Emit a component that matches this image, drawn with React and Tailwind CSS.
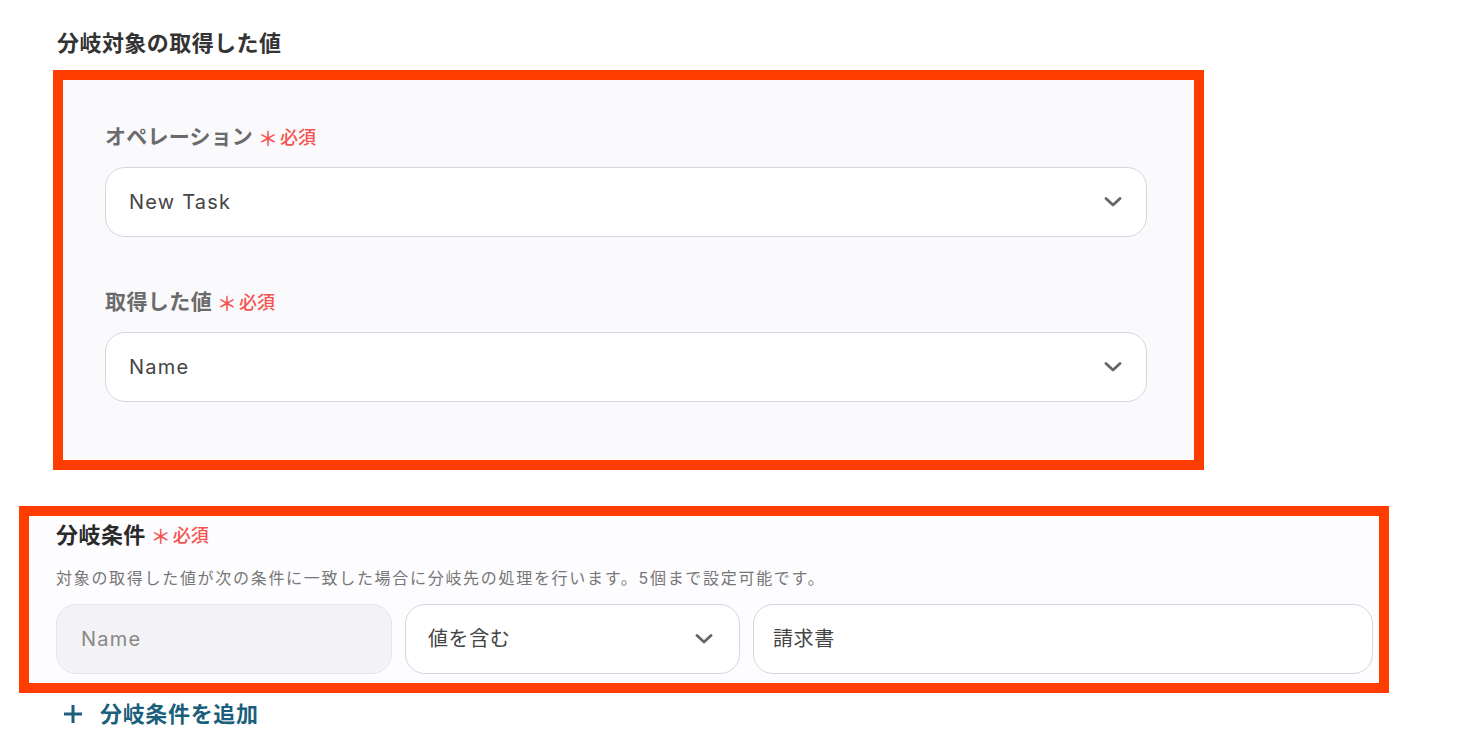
import React from "react";

const FONT = { fontFamily: '"Inter", "Noto Sans CJK JP", sans-serif' };

function Chevron() {
  return (
    <svg width="18" height="10" viewBox="0 0 18 10" fill="none">
      <path d="M2 1.5 L9 8 L16 1.5" stroke="#666" strokeWidth="2.8" strokeLinecap="round" strokeLinejoin="round" />
    </svg>
  );
}

function Required() {
  return (
    <span className="flex items-center text-[#f4534f] text-[18px] font-medium ml-[5px]">
      <span className="text-[20px] mr-[2px] translate-y-[2px]">＊</span>
      <span>必須</span>
    </span>
  );
}

function Select({ value }) {
  return (
    <div className="w-[1042px] h-[70px] rounded-[20px] border border-[#d6d6de] bg-white flex items-center justify-between pl-[23px] pr-[24px]">
      <span className="text-[20px] tracking-[0.06em] text-[#444]">{value}</span>
      <Chevron />
    </div>
  );
}

export default function App() {
  return (
    <div className="w-[1467px] h-[745px] bg-white overflow-hidden" style={FONT}>
      <div className="pl-[57px] pt-[27px] h-[60px]">
        <div className="text-[22px] leading-[33px] font-bold tracking-[0.02em] text-[#333]">分岐対象の取得した値</div>
      </div>
      <div className="mt-[10px] ml-[53px] w-[1151px] h-[400px] border-[10px] border-[#ff3d00] bg-[#faf9fc] pl-[42px] pt-[42px]">
        <div className="flex items-center h-[30px]">
          <span className="text-[21px] font-bold tracking-[0.01em] text-[#6b6b6b]">オペレーション</span>
          <Required />
        </div>
        <div className="mt-[15px]">
          <Select value="New Task" />
        </div>
        <div className="flex items-center h-[30px] mt-[50px]">
          <span className="text-[21px] font-bold tracking-[0.02em] text-[#6b6b6b]">取得した値</span>
          <Required />
        </div>
        <div className="mt-[15px]">
          <Select value="Name" />
        </div>
      </div>
      <div className="mt-[36px] ml-[19px] w-[1370px] h-[187px] border-[10px] border-[#ff3d00] bg-[#fdfcfe] pl-[27px] pt-[4px]">
        <div className="flex items-center h-[30px]">
          <span className="text-[22px] font-bold tracking-[0.02em] text-[#2a2a2a]">分岐条件</span>
          <Required />
        </div>
        <div className="mt-[16px] h-[24px] leading-[24px] text-[16px] tracking-[1.7px] text-[#777]">
          対象の取得した値が次の条件に一致した場合に分岐先の処理を行います。5個まで設定可能です。
        </div>
        <div className="mt-[14px] flex gap-[13px]">
          <div className="w-[336px] h-[70px] rounded-[20px] border border-[#e6e5ea] bg-[#f3f2f5] flex items-center pl-[24px]">
            <span className="text-[20px] tracking-[0.06em] text-[#888]">Name</span>
          </div>
          <div className="w-[335px] h-[70px] rounded-[20px] border border-[#d6d6de] bg-white flex items-center justify-between pl-[22px] pr-[26px]">
            <span className="text-[20px] tracking-[0.03em] text-[#444]">値を含む</span>
            <Chevron />
          </div>
          <div className="w-[620px] h-[70px] rounded-[20px] border border-[#d6d6de] bg-white flex items-center pl-[19px]">
            <span className="text-[20px] tracking-[0.03em] text-[#444]">請求書</span>
          </div>
        </div>
      </div>
      <div className="mt-[6px] pl-[63px] flex items-center h-[30px]">
        <svg width="20" height="20" viewBox="0 0 20 20" fill="none">
          <path d="M10 1 V19 M1 10 H19" stroke="#1b5f7c" strokeWidth="3" />
        </svg>
        <span className="ml-[17px] text-[22px] font-bold tracking-[0.03em] text-[#1b5f7c]">分岐条件を追加</span>
      </div>
    </div>
  );
}
